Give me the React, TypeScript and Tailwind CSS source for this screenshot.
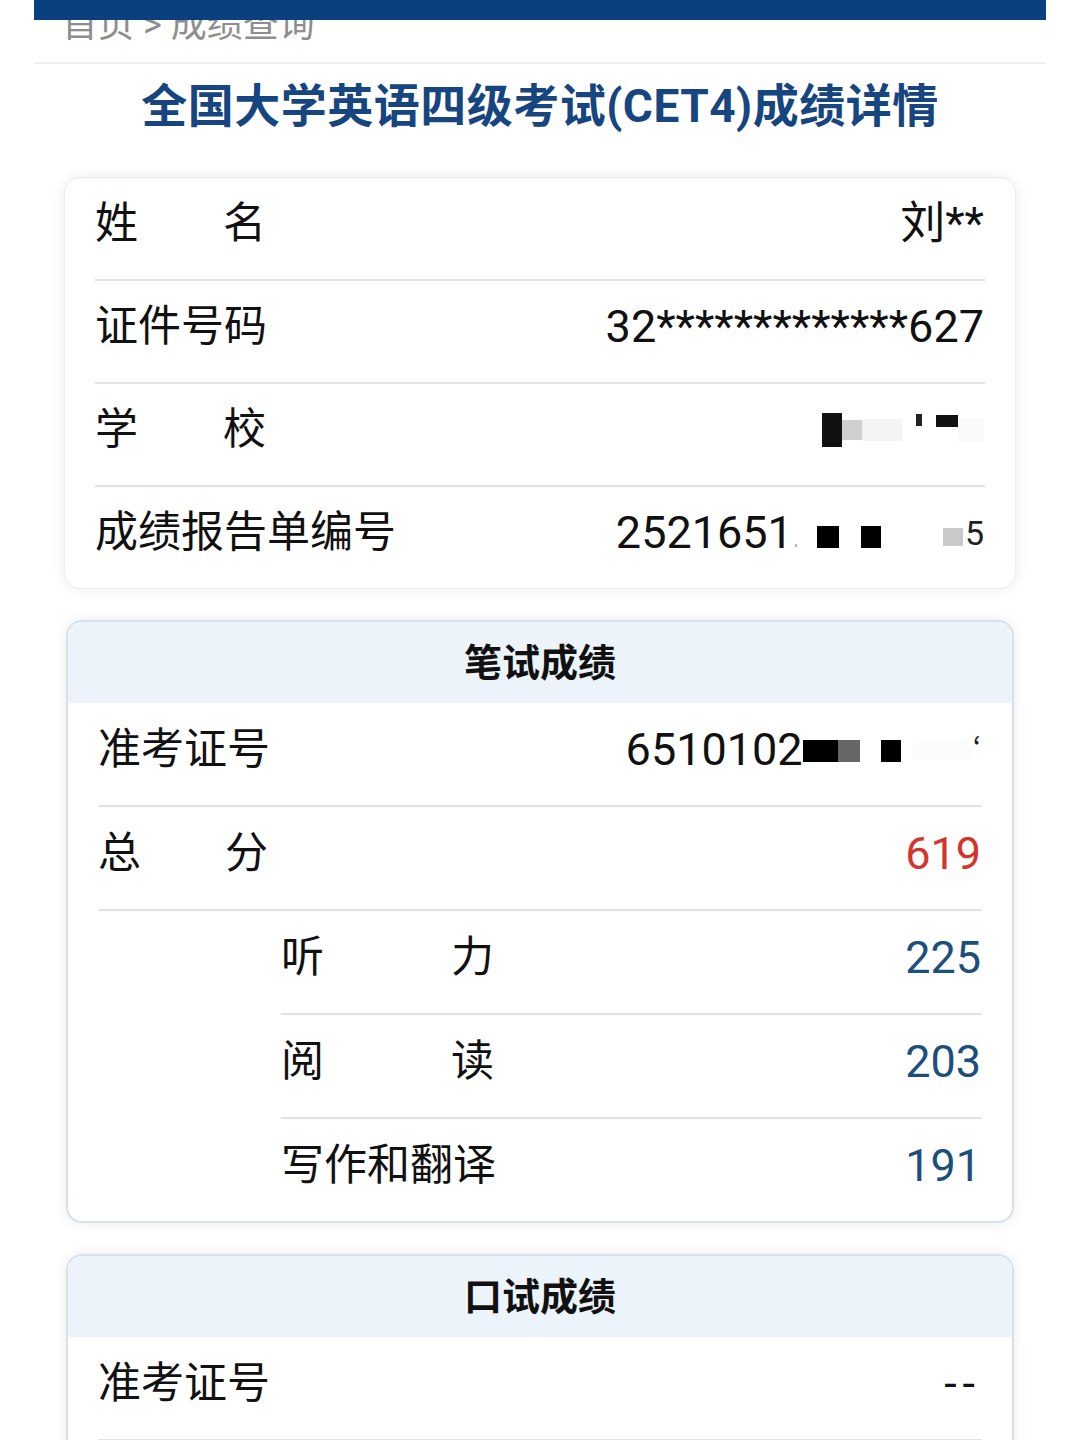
import React from 'react';

const FONT = 'font-["Roboto","Noto_Sans_CJK_SC",sans-serif]';

// A label whose characters are spread across a fixed width
function Spread({ chars, width }: { chars: string[]; width: string }) {
  return (
    <span className={`flex justify-between ${width}`}>
      {chars.map((c, i) => (
        <span key={i}>{c}</span>
      ))}
    </span>
  );
}

function Row({
  label,
  children,
  last = false,
  indent = false,
  tight = false,
}: {
  label: React.ReactNode;
  children: React.ReactNode;
  last?: boolean;
  indent?: boolean;
  tight?: boolean;
}) {
  const height = last
    ? tight
      ? 'h-[101px]'
      : 'h-[102px]'
    : tight
      ? 'h-[103px] border-b-2 border-[#e2e2e2]'
      : 'h-[104px] border-b-2 border-[#e2e2e2]';
  return (
    <div
      className={`flex items-center justify-between pb-[10px] leading-none text-[#111] ${height} ${
        indent ? 'ml-[183px]' : ''
      }`}
    >
      <div className="text-[43px]">{label}</div>
      <div className="flex items-center text-[45px] pr-[1px]">{children}</div>
    </div>
  );
}

function Block({ className }: { className: string }) {
  return <span className={`inline-block ${className}`} />;
}

function SectionCard({ title, children }: { title: string; children: React.ReactNode }) {
  return (
    <div className="mx-[32px] rounded-[16px] border-2 border-[#d7e1eb] bg-white shadow-[0_0_14px_rgba(0,0,0,0.08)] overflow-hidden">
      <div className="h-[81px] bg-[#edf3fb] flex items-center justify-center text-[38px] font-bold text-[#111] leading-none">
        {title}
      </div>
      <div className="px-[30px]">{children}</div>
    </div>
  );
}

export default function App() {
  return (
    <div className={`relative h-[1440px] overflow-hidden bg-white ${FONT}`}>
      {/* fixed header bar lying over the scrolled breadcrumb */}
      <div className="absolute top-0 left-[34px] w-[1012px] h-[20px] bg-[#0a3f80] z-10" />

      <div className="mx-[34px]">
        <div className="h-[64px] border-b-2 border-[#efefef]">
          <div className="pt-[7px] pl-[28px] text-[36px] leading-[36px] text-[#8e8e8e]">
            首页 &gt; 成绩查询
          </div>
        </div>

        <h1 className="mt-[14px] text-center text-[46px] leading-[56px] font-bold text-[#17457f] tracking-[0.5px]">
          全国大学英语四级考试(CET4)成绩详情
        </h1>

        {/* personal info */}
        <div className="mt-[43px] mx-[30px] rounded-[16px] border border-[#ededed] bg-white shadow-[0_0_14px_rgba(0,0,0,0.08)] px-[30px]">
          <Row tight label={<Spread chars={['姓', '名']} width="w-[171px]" />}>
            刘**
          </Row>
          <Row tight label="证件号码">
            32*************627
          </Row>
          <Row tight label={<Spread chars={['学', '校']} width="w-[171px]" />}>
            <span className="flex items-center h-[44px]">
              <Block className="w-[20px] h-[34px] bg-[#111]" />
              <Block className="w-[20px] h-[20px] bg-[#cfcfcf]" />
              <Block className="w-[40px] h-[22px] bg-[#f3f3f3]" />
              <Block className="w-[14px] h-[10px] bg-white" />
              <Block className="w-[6px] h-[12px] bg-[#222] mb-[20px]" />
              <Block className="w-[14px] h-[10px] bg-white" />
              <Block className="w-[22px] h-[12px] bg-[#111] mb-[18px]" />
              <Block className="w-[26px] h-[24px] bg-[#fafafa]" />
            </span>
          </Row>
          <Row tight label="成绩报告单编号" last>
            <span>2521651</span>
            <Block className="w-[2px] h-[3px] bg-[#bbb] ml-[2px] mt-[26px]" />
            <Block className="w-[22px] h-[22px] bg-black ml-[20px] mt-[8px]" />
            <Block className="w-[20px] h-[22px] bg-black ml-[22px] mt-[8px]" />
            <Block className="w-[20px] h-[18px] bg-[#c9c9c9] ml-[62px] mt-[8px]" />
            <span className="ml-[2px] text-[34px] text-[#222] leading-none">5</span>
          </Row>
        </div>

        <div className="h-[31px]" />

        <SectionCard title="笔试成绩">
          <Row label="准考证号">
            <span>6510102</span>
            <Block className="w-[35px] h-[22px] bg-black mt-[4px]" />
            <Block className="w-[22px] h-[22px] bg-[#666] mt-[4px]" />
            <Block className="w-[20px] h-[22px] bg-black ml-[21px] mt-[4px]" />
            <Block className="w-[60px] h-[22px] bg-[#fcfcfc] ml-[12px]" />
            <span className="text-[30px] text-[#222]">ʻ</span>
          </Row>
          <Row label={<Spread chars={['总', '分']} width="w-[170px]" />}>
            <span className="text-[#d4342c]">619</span>
          </Row>
          <Row indent label={<Spread chars={['听', '力']} width="w-[213px]" />}>
            <span className="text-[#1d4f7c]">225</span>
          </Row>
          <Row indent label={<Spread chars={['阅', '读']} width="w-[213px]" />}>
            <span className="text-[#1d4f7c]">203</span>
          </Row>
          <Row indent last label="写作和翻译">
            <span className="text-[#1d4f7c]">191</span>
          </Row>
        </SectionCard>

        <div className="h-[31px]" />

        <SectionCard title="口试成绩">
          <Row label="准考证号">
            <span className="tracking-[6px]">--</span>
          </Row>
          <div className="h-[40px]" />
        </SectionCard>
      </div>
    </div>
  );
}
